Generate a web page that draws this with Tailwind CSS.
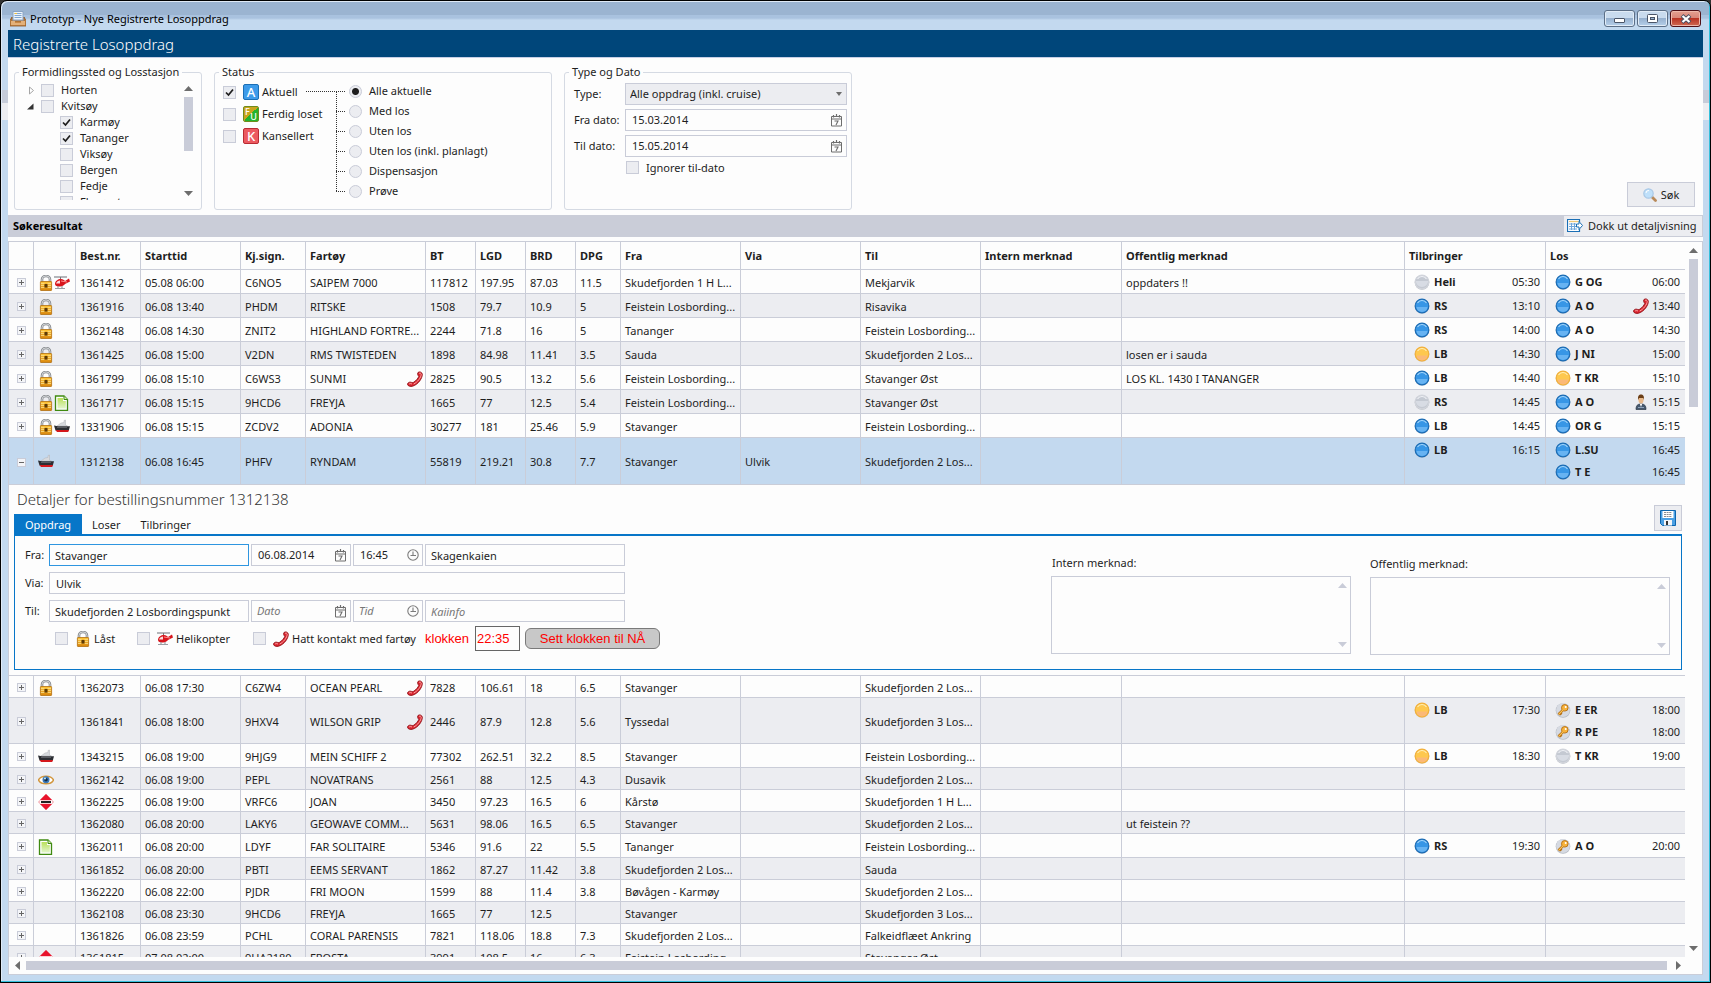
<!DOCTYPE html>
<html lang="no">
<head>
<meta charset="utf-8">
<title>Prototyp - Nye Registrerte Losoppdrag</title>
<script src="https://cdn.jsdelivr.net/npm/@tailwindcss/browser@4"></script>
</head>
<body class="h-screen overflow-hidden bg-[#333] font-['Noto_Sans','Open_Sans',sans-serif] text-[11px] leading-4 text-[#1e1e1e]">

<svg class="absolute h-0 w-0" aria-hidden="true">
  <defs>
    <linearGradient id="gold" x1="0" y1="0" x2="0" y2="1"><stop offset="0" stop-color="#ffc83c"/><stop offset="1" stop-color="#d9860c"/></linearGradient>
    <linearGradient id="page" x1="0" y1="0" x2="0" y2="1"><stop offset="0" stop-color="#b9e05a"/><stop offset="1" stop-color="#e2f5cc"/></linearGradient>
  </defs>
  <symbol id="lock" viewBox="0 0 16 16"><path d="M4 7V4.500a4 3.600 0 0 1 8 0V7" fill="none" stroke="#8a8d91" stroke-width="2.600"/><path d="M4 7V4.500a4 3.600 0 0 1 8 0V7" fill="none" stroke="#d3d6d9" stroke-width="1"/><rect x="2.400" y="6.500" width="11.200" height="9" rx=".6" fill="url(#gold)" stroke="#b27010" stroke-width=".8"/><path d="M3 8.500h3.500M9.500 8.500H13M3 10.500h3M10 10.500h3M3 12.500h3.500M9.500 12.500H13" stroke="#fbe08a" stroke-width=".8"/><rect x="6.500" y="9" width="3" height="3.500" fill="#5c3a08"/></symbol>
  <symbol id="heli" viewBox="0 0 16 16"><path d="M0 2h13" stroke="#9b9ea3" stroke-width="1.500"/><path d="M6.500 2v3" stroke="#777"/><path d="M1 9c0-3 3-5 6-5 2 0 3 1 4 2l4-2.500 1 3L11 9c-1 1.500-3 2.500-5 2.500C3 11.500 1 11 1 9z" fill="#d8151c"/><path d="M2 8.500C2.500 6.500 4.500 5.500 6 5.500V8.500z" fill="#fbdcdc"/><path d="M7 6l6 1" stroke="#ff8c8c"/><path d="M4 11v2.500M8 11v2.500M1 13.500h10" stroke="#9b9ea3" stroke-width="1.200"/></symbol>
  <symbol id="phone" viewBox="0 0 16 16"><path d="M11 1.500c1.500-1.300 4-.3 4.300 1.700.2 4-4.300 10.500-9.800 12-2 .5-4.500 0-5-1.700-.2-1.500 1.500-2.500 3-2.300 1.500.2 2 .8 3.300 0C9 9.700 11 7.500 11.800 5.500 11 4.500 10 2.500 11 1.500z" fill="#d92530" stroke="#8e0e14" stroke-width=".9"/><path d="M12 2.500c1-.8 2-.2 2.200.8 0 3-3.700 8-7.500 9.700M2 13.200c.7-.8 1.800-.7 3-.2" fill="none" stroke="#ffa3a3"/></symbol>
  <symbol id="note" viewBox="0 0 16 16"><path d="M1.500 1H10l3.500 3.500V15.500h-12z" fill="#fff" stroke="#3f8a10" stroke-width="1.300"/><path d="M3.500 3H9v3h2.800v7.500H3.500z" fill="url(#page)"/><path d="M10 1v3.500h3.500" fill="#d5eeb0" stroke="#3f8a10"/></symbol>
  <symbol id="ship" viewBox="0 0 16 16"><path d="M5 5.500l2-1.500 3-.5V1.500l1.500-.5v5l2 1H3z" fill="#d8dade" stroke="#b2b5b9" stroke-width=".5"/><path d="M0 6.500l4 .8h12l-1.200 4.200H1.500z" fill="#2c2e33"/><path d="M3 8.500h10" stroke="#666a70" stroke-width=".8"/><path d="M1.500 11h13.500l-.8 2H3z" fill="#d4181c"/></symbol>
  <symbol id="eye" viewBox="0 0 16 16"><path d="M.5 8C3 3 13 3 15.500 8 13 13 3 13 .5 8z" fill="#fff" stroke="#d2963c" stroke-width="1.500"/><circle cx="8" cy="7.800" r="3.500" fill="#3a78b8"/><circle cx="8" cy="7.800" r="1.800" fill="#152a44"/><circle cx="7" cy="6.500" r=".9" fill="#dff"/></symbol>
  <symbol id="stop" viewBox="0 0 16 16"><path d="M8 .500L15.500 8 8 15.500.500 8z" fill="#fbdadd" stroke="#ef8a94" stroke-width=".8"/><path d="M8 0l5.500 5.500V10.500L8 16l-5.500-5.500V5.500z" fill="#e8132c"/><rect x="2" y="6.200" width="12" height="3.600" fill="#fff"/><rect x="3" y="7" width="10" height="2" fill="#222"/></symbol>
  <symbol id="blue" viewBox="0 0 16 16"><circle cx="8" cy="8.500" r="7.300" fill="#c4c8cf"/><circle cx="8" cy="8" r="6.800" fill="#3796e6" stroke="#1c6cb4" stroke-width="1.200"/><path d="M2.500 9h11a5.500 5 0 0 1-11 0z" fill="#67b3f2"/><path d="M3.500 5a5.300 5.300 0 0 1 9 0" fill="none" stroke="#a9d8fb" stroke-width="1.100"/></symbol>
  <symbol id="yellow" viewBox="0 0 16 16"><circle cx="8" cy="8.500" r="7.300" fill="#cfc8bb"/><circle cx="8" cy="8" r="6.800" fill="#fec84e" stroke="#f2b03a" stroke-width="1.200"/><path d="M2.500 9.500h11a5.500 5 0 0 1-11 0z" fill="#fbb977"/><path d="M3.500 5a5.300 5.300 0 0 1 9 0" fill="none" stroke="#fff0b8" stroke-width="1.100"/></symbol>
  <symbol id="grey" viewBox="0 0 16 16"><circle cx="8" cy="8.500" r="7.300" fill="#b9bdc5"/><circle cx="8" cy="8" r="6.800" fill="#c4c9d2" stroke="#d2d5dc" stroke-width="1.200"/><path d="M1.800 7h12.400a6.200 6 0 0 1-12.400 0z" fill="#d8dce4"/><path d="M3.500 5a5.300 5.300 0 0 1 9 0" fill="none" stroke="#f0f2f6" stroke-width="1.100"/></symbol>
  <symbol id="key" viewBox="0 0 16 16"><circle cx="8" cy="8.500" r="7.300" fill="#b4b9c2"/><circle cx="8" cy="8" r="6.900" fill="#d6dae2"/><path d="M8.300 7.700L3.500 12.500M5 11l1.500 1.500" stroke="#b36d12" stroke-width="2.600"/><circle cx="9.800" cy="5.800" r="3.300" fill="#f7b23a" stroke="#b36d12" stroke-width=".9"/><path d="M8.300 7.700L3.700 12.300" stroke="#fbc65a" stroke-width="1.200"/><circle cx="10.700" cy="4.900" r="1" fill="#fff"/></symbol>
  <symbol id="person" viewBox="0 0 16 16"><path d="M3 15.500c0-4 1.500-5.500 5-5.500s5 1.500 5 5.500z" fill="#46586d" stroke="#2b3848" stroke-width=".7"/><path d="M6.800 10h2.400L8 13z" fill="#fff"/><ellipse cx="8" cy="5.500" rx="2.600" ry="4" fill="#e9b98a"/><path d="M5.200 6C4.500 2 6 .5 8 .5s3.500 1.500 2.800 5.500L10.200 4H6z" fill="#6b3e16"/><path d="M5 13.500h6" stroke="#8fa3ba" stroke-width="1"/></symbol>
  <symbol id="cal" viewBox="0 0 11 13"><path d="M.5 2.500h10v9.500H.5zM.5 5h10" fill="none" stroke="#6d6d6d"/><path d="M2.500 1v2.500M5.500 0v2M8.500 1v2.500" stroke="#6d6d6d" stroke-width="1.200"/><path d="M3.500 7h3.500l-2 4" fill="none" stroke="#6d6d6d" stroke-width="1.100"/></symbol>
  <symbol id="clock" viewBox="0 0 12 12"><circle cx="6" cy="6" r="5.200" fill="none" stroke="#7c7c7c" stroke-width="1.100"/><path d="M6 2.500V6.500M3.500 6.500H9" fill="none" stroke="#7c7c7c" stroke-width="1.100"/></symbol>
  <symbol id="tick" viewBox="0 0 13 13"><path d="M3 6.500L5.500 9l4.500-5.500" fill="none" stroke="#1e1e1e" stroke-width="1.700"/></symbol>
</svg>

<div class="flex h-full flex-col rounded-t-[7px] border border-black bg-[linear-gradient(#9bb4d1_0,#9bb4d1_14px,#a9c2df_14px,#a9c2df_17px,#c3d9ef_19px,#c3d9ef_89px,#c6ccd9_89px,#c6ccd9_102px,#ecedf1_102px,#ecedf1_119px,#c3d9ef_119px)] px-[7px] pb-[7px] shadow-[inset_-1px_-1px_0_#35c0dc,inset_1px_1px_0_#dfeaf6]">

  <div class="flex h-[29px] shrink-0 items-center">
    <svg class="mt-1.5 ml-0.5 h-4 w-4" viewBox="0 0 16 16"><path d="M3 .500h10V9H3z" fill="#eef4fb" stroke="#8aa4c4"/><path d="M4.500 2.500h7M4.500 4.500h7M4.500 6.500h7" stroke="#7fa6d2"/><path d="M4.500 2.500h2.500" stroke="#f0c040"/><path d="M0 9.500L2 6v4h12V6l2 3.500V15H0z" fill="#c98a48" stroke="#8a5422" stroke-width=".8"/><path d="M1 10h4v2h6v-2h4v4H1z" fill="#e3b17a"/></svg>
    <h1 class="mt-1.5 ml-1 flex-1 text-black">Prototyp - Nye Registrerte Losoppdrag</h1>
    <div class="mt-1.5 mr-0.5 flex gap-0.5">
      <button aria-label="Minimer" class="grid h-[17px] w-[31px] place-items-center rounded-[3px] border border-[#5c6f87] bg-[linear-gradient(#c9dbee_50%,#97b1cf_50%,#b6d0ea)] shadow-[inset_0_0_0_1px_#e2ecf7]"><span class="mt-1 h-[5px] w-[11px] rounded-[1px] border border-[#4a5568] bg-white"></span></button>
      <button aria-label="Maksimer" class="grid h-[17px] w-[31px] place-items-center rounded-[3px] border border-[#5c6f87] bg-[linear-gradient(#c9dbee_50%,#97b1cf_50%,#b6d0ea)] shadow-[inset_0_0_0_1px_#e2ecf7]"><svg class="h-[9px] w-[11px]" viewBox="0 0 11 9"><rect x=".5" y=".5" width="10" height="8" rx="1" fill="#fff" stroke="#4a5568"/><rect x="3.500" y="3.500" width="4" height="2" fill="#9cb5d2" stroke="#4a5568"/></svg></button>
      <button aria-label="Lukk" class="grid h-[17px] w-[31px] place-items-center rounded-[3px] border border-[#4f1016] bg-[linear-gradient(#e3a091_0,#d98476_50%,#b93424_50%,#cf6a52)] shadow-[inset_0_0_0_1px_#eeb8ab]"><svg class="h-[10px] w-[12px]" viewBox="0 0 12 10"><path d="M2 1.500l8 7M10 1.500l-8 7" stroke="#4a4f60" stroke-width="4"/><path d="M2.500 2l7 6M9.500 2l-7 6" stroke="#fff" stroke-width="2.200"/></svg></button>
    </div>
  </div>

  <div class="flex min-h-0 flex-1 flex-col bg-[#fdfdfd]">
    <header class="flex h-7 shrink-0 items-center border-b border-[#c6cfe6] bg-[#00467a] pl-[5px]">
      <h2 class="text-[15px] leading-5 font-light text-white">Registrerte Losoppdrag</h2>
    </header>

    <form class="flex shrink-0 items-end gap-3 pt-1.5 pr-2 pb-[5px] pl-1.5">
      <fieldset class="h-[146px] w-[188px] rounded-[3px] border border-[#d5dae3]">
        <legend class="ml-1 px-[3px]">Formidlingssted og Losstasjon</legend>
        <div class="mt-0.5 flex h-[118px] overflow-hidden">
          <ul id="tree" class="flex-1 pl-3"></ul>
          <div class="mr-2 flex w-[9px] flex-col items-center py-1">
            <svg class="h-[5px] w-[9px]" viewBox="0 0 9 5"><path d="M0 5L4.500 0 9 5z" fill="#6d6d6d"/></svg>
            <span class="mt-1.5 h-[54px] w-[9px] bg-[#c9ccd8]"></span>
            <svg class="mt-auto h-[5px] w-[9px]" viewBox="0 0 9 5"><path d="M0 0h9L4.500 5z" fill="#6d6d6d"/></svg>
          </div>
        </div>
      </fieldset>

      <fieldset class="h-[146px] w-[338px] rounded-[3px] border border-[#d5dae3]">
        <legend class="ml-1 px-[3px]">Status</legend>
        <div class="mt-px flex pl-2">
          <div class="w-[83px] shrink-0">
            <label class="flex h-[22px] items-center whitespace-nowrap"><span class="relative mr-[7px] h-[13px] w-[13px] shrink-0"><input type="checkbox" checked class="peer block h-[13px] w-[13px] appearance-none border border-[#c9ccd8] bg-[#ecedf1]"><svg class="pointer-events-none absolute inset-0 hidden h-[13px] w-[13px] peer-checked:block"><use href="#tick"/></svg></span><span class="mr-[3px] grid h-4 w-4 shrink-0 place-items-center rounded-[2px] border border-[#1b6fb5] bg-[#3d9bea] text-[13px] leading-3 font-medium text-white">A</span>Aktuell</label>
            <label class="flex h-[22px] items-center whitespace-nowrap"><input type="checkbox" class="mr-[7px] block h-[13px] w-[13px] shrink-0 appearance-none border border-[#c9ccd8] bg-[#ecedf1]"><span class="mr-[3px] flex h-4 w-4 shrink-0 justify-between rounded-[2px] border border-[#6f8c1c] bg-[linear-gradient(135deg,#c9a41c_50%,#25b32c_50%)] px-px text-[9px] leading-[9px] font-medium text-white"><span>F</span><span class="self-end">U</span></span>Ferdig loset</label>
            <label class="flex h-[22px] items-center whitespace-nowrap"><input type="checkbox" class="mr-[7px] block h-[13px] w-[13px] shrink-0 appearance-none border border-[#c9ccd8] bg-[#ecedf1]"><span class="mr-[3px] grid h-4 w-4 shrink-0 place-items-center rounded-[2px] border border-[#b92b33] bg-[#ec5a60] text-[13px] leading-3 font-medium text-white">K</span>Kansellert</label>
          </div>
          <svg class="h-[120px] w-[43px] shrink-0" viewBox="0 0 43 120" shape-rendering="crispEdges"><path d="M0 10.500h39M30 30.500h9M30 50.500h9M30 70.500h9M30 90.500h9M30 110.500h9M30.500 11v100" fill="none" stroke="#333" stroke-dasharray="1 1"/></svg>
          <div id="radios"></div>
        </div>
      </fieldset>

      <fieldset class="h-[146px] w-[288px] rounded-[3px] border border-[#d5dae3]">
        <legend class="ml-1 px-[3px]">Type og Dato</legend>
        <div class="mt-[3px] grid grid-cols-[51px_1fr] items-center gap-y-1 pr-1 pl-[9px]">
          <label for="type">Type:</label>
          <div class="relative">
            <select id="type" class="block h-[22px] w-full appearance-none border border-[#c9ccd8] bg-[#ecedf1] pl-1"><option>Alle oppdrag (inkl. cruise)</option></select>
            <svg class="pointer-events-none absolute top-[9px] right-[5px] h-1 w-[6px]" viewBox="0 0 6 4"><path d="M0 0h6L3 4z" fill="#6d6d6d"/></svg>
          </div>
          <label for="from" class="whitespace-nowrap">Fra dato:</label>
          <div class="flex h-[22px] items-center border border-[#c9ccd8] pr-1"><input id="from" value="15.03.2014" class="min-w-0 flex-1 pl-1.5 outline-none"><button type="button" aria-label="Velg fra dato"><svg class="h-[13px] w-[11px]"><use href="#cal"/></svg></button></div>
          <label for="to" class="whitespace-nowrap">Til dato:</label>
          <div class="flex h-[22px] items-center border border-[#c9ccd8] pr-1"><input id="to" value="15.05.2014" class="min-w-0 flex-1 pl-1.5 outline-none"><button type="button" aria-label="Velg til dato"><svg class="h-[13px] w-[11px]"><use href="#cal"/></svg></button></div>
          <label class="col-start-2 flex h-[13px] items-center pl-px"><input type="checkbox" class="mr-[7px] h-[13px] w-[13px] appearance-none border border-[#c9ccd8] bg-[#ecedf1]">Ignorer til-dato</label>
        </div>
      </fieldset>

      <button type="button" class="mb-[3px] ml-auto flex h-[25px] w-[68px] items-center justify-center gap-1 border border-[#c9ccd8] bg-[#ecedf1]">
        <svg class="h-[14px] w-[14px]" viewBox="0 0 14 14"><path d="M8.500 8.500l4 4" stroke="#b98a5a" stroke-width="2.800" stroke-linecap="round"/><circle cx="5.500" cy="5.500" r="4.700" fill="#bfe0fa" stroke="#a9c8e6" stroke-width="1.200"/><path d="M3 5a2.700 2.700 0 0 1 3-2.500" fill="none" stroke="#fff"/></svg>Søk</button>
    </form>

    <div class="flex h-[22px] shrink-0 items-center justify-between bg-[#cacdd8] pr-px pl-[5px]">
      <h3 class="font-bold text-black">Søkeresultat</h3>
      <button class="flex h-5 w-[138px] items-center gap-[5px] bg-[#ecedf1] pl-[3px] whitespace-nowrap">
        <svg class="h-4 w-4 shrink-0" viewBox="0 0 16 16"><path d="M12.500 4V1.500H.500v12h12V11" fill="#fff" stroke="#1b6fb5" stroke-width="1.200"/><path d="M2 3.500h9.500" stroke="#f0c97a" stroke-width="1.300"/><path d="M2 6h7M2 8.500h7M2 11h8M4.500 5v7M7.500 5v7" stroke="#6fa6dc"/><path d="M9.500 6h2.500V3.500l3.500 4L12 11.500V9H9.500z" fill="#fff" stroke="#1b6fb5"/></svg>Dokk ut detaljvisning</button>
    </div>

    <div class="mt-1 flex min-h-0 flex-1 flex-col border border-[#cacdd8]">
      <div class="flex min-h-0 flex-1">
        <div class="min-w-0 flex-1 overflow-hidden">
          <table class="w-full table-fixed border-separate border-spacing-0">
            <colgroup><col class="w-[25px]"><col class="w-[42px]"><col class="w-[65px]"><col class="w-[100px]"><col class="w-[65px]"><col class="w-[120px]"><col class="w-[50px]"><col class="w-[50px]"><col class="w-[50px]"><col class="w-[45px]"><col class="w-[120px]"><col class="w-[120px]"><col class="w-[120px]"><col class="w-[141px]"><col><col class="w-[141px]"><col class="w-[139px]"></colgroup>
            <thead><tr id="head" class="h-7"></tr></thead>
            <tbody id="upper"></tbody>
            <tbody>
              <tr>
                <td colspan="17" class="h-[191px] border-b border-[#cacdd8] pr-[3px] pb-[5px] pl-[5px] align-bottom">
                  <div class="flex h-[49px] items-end">
                    <div class="flex-1">
                      <h3 class="pb-[5px] pl-[3px] text-[15px] leading-5 font-light text-[#333]">Detaljer for bestillingsnummer 1312138</h3>
                      <div class="flex" role="tablist">
                        <button role="tab" aria-selected="true" class="h-5 w-[68px] bg-[#0776c8] pt-px text-white">Oppdrag</button>
                        <button role="tab" class="ml-2.5 h-5 pt-px">Loser</button>
                        <button role="tab" class="ml-5 h-5 pt-px">Tilbringer</button>
                      </div>
                    </div>
                    <button aria-label="Lagre" class="mb-[3px] grid h-[26px] w-7 place-items-center border border-[#c9ccd8] bg-[#ecedf1]"><svg class="h-4 w-4" viewBox="0 0 16 16"><path d="M.5.500h15v15H2.500l-2-2z" fill="#4ba0e4" stroke="#0e66ae"/><rect x="2.500" y="1" width="11" height="7" fill="#fff"/><path d="M4 2.500h8M4 4.500h8M4 6.500h8" stroke="#8a8d91" stroke-dasharray="2 .6"/><rect x="4" y="10" width="8" height="5.500" fill="#f3f5f8"/><rect x="6" y="11" width="2" height="4" fill="#333"/></svg></button>
                  </div>
                  <div class="flex h-[136px] justify-between border border-t-2 border-[#0776c8] pr-[11px] pl-2.5">
                    <div class="pt-2">
                      <div class="mb-1.5 flex items-center gap-0.5"><label for="fra" class="w-[22px]">Fra:</label>
                        <input id="fra" value="Stavanger" class="h-[22px] w-[200px] border border-[#2f96e0] px-[5px] outline-none">
                        <div class="flex h-[22px] w-[100px] items-center border border-[#c9ccd8] pr-1"><input aria-label="Fra dato" value="06.08.2014" class="min-w-0 flex-1 pl-1.5 outline-none"><button aria-label="Velg dato"><svg class="h-[13px] w-[11px]"><use href="#cal"/></svg></button></div>
                        <div class="flex h-[22px] w-[70px] items-center border border-[#c9ccd8] pr-[3px]"><input aria-label="Fra tid" value="16:45" class="min-w-0 flex-1 pl-1.5 outline-none"><button aria-label="Velg tid"><svg class="h-3 w-3"><use href="#clock"/></svg></button></div>
                        <input aria-label="Kai fra" value="Skagenkaien" class="h-[22px] w-[200px] border border-[#c9ccd8] px-[5px] outline-none"></div>
                      <div class="mb-1.5 flex items-center gap-0.5"><label for="via" class="w-[22px]">Via:</label><input id="via" value="Ulvik" class="h-[22px] w-[576px] border border-[#c9ccd8] px-1.5 outline-none"></div>
                      <div class="flex items-center gap-0.5"><label for="til" class="w-[22px]">Til:</label>
                        <input id="til" value="Skudefjorden 2 Losbordingspunkt" class="h-[22px] w-[200px] border border-[#c9ccd8] px-[5px] outline-none">
                        <div class="flex h-[22px] w-[100px] items-center border border-[#c9ccd8] pr-1"><input aria-label="Til dato" placeholder="Dato" class="min-w-0 flex-1 pl-[5px] outline-none placeholder:text-[#777] placeholder:italic"><button aria-label="Velg dato"><svg class="h-[13px] w-[11px]"><use href="#cal"/></svg></button></div>
                        <div class="flex h-[22px] w-[70px] items-center border border-[#c9ccd8] pr-[3px]"><input aria-label="Til tid" placeholder="Tid" class="min-w-0 flex-1 pl-[5px] outline-none placeholder:text-[#777] placeholder:italic"><button aria-label="Velg tid"><svg class="h-3 w-3"><use href="#clock"/></svg></button></div>
                        <input aria-label="Kai til" placeholder="Kaiinfo" class="h-[22px] w-[200px] border border-[#c9ccd8] px-[5px] outline-none placeholder:text-[#777] placeholder:italic"></div>
                      <div class="mt-1 flex h-[25px] items-center pl-[30px] whitespace-nowrap">
                        <label class="flex w-[82px] shrink-0 items-center"><input type="checkbox" class="mr-[7px] h-[13px] w-[13px] appearance-none border border-[#c9ccd8] bg-[#ecedf1]"><svg class="mr-[3px] h-4 w-4"><use href="#lock"/></svg>Låst</label>
                        <label class="flex w-[116px] shrink-0 items-center"><input type="checkbox" class="mr-[7px] h-[13px] w-[13px] appearance-none border border-[#c9ccd8] bg-[#ecedf1]"><svg class="mr-[3px] h-4 w-4"><use href="#heli"/></svg>Helikopter</label>
                        <label class="flex w-[172px] shrink-0 items-center"><input type="checkbox" class="mr-[7px] h-[13px] w-[13px] appearance-none border border-[#c9ccd8] bg-[#ecedf1]"><svg class="mr-[3px] h-4 w-4"><use href="#phone"/></svg>Hatt kontakt med fartøy</label>
                        <label for="kl" class="w-[50px] shrink-0 font-['Liberation_Sans',sans-serif] text-[13px] text-[#f00]">klokken</label>
                        <input id="kl" value="22:35" class="h-[25px] w-[45px] shrink-0 border border-[#666] pl-px font-['Liberation_Sans',sans-serif] text-[13px] text-[#f00] outline-none">
                        <button class="ml-[5px] h-[21px] w-[135px] shrink-0 rounded-[6px] border border-[#7a7a7a] bg-[#c8c8c8] font-['Liberation_Sans',sans-serif] text-[13px] text-[#f00]">Sett klokken til NÅ</button>
                      </div>
                    </div>
                    <div class="flex gap-[19px]">
                      <div class="pt-[19px]"><label for="im" class="mb-[5px] block pl-px">Intern merknad:</label>
                        <div class="relative"><textarea id="im" class="block h-[78px] w-[300px] resize-none border border-[#c9ccd8] outline-none"></textarea>
                        <svg class="pointer-events-none absolute top-1.5 right-1 h-[66px] w-[9px]" viewBox="0 0 9 66"><path d="M0 6L4.500 1 9 6zM0 60h9L4.500 65z" fill="#c9ccd8"/></svg></div></div>
                      <div class="pt-5"><label for="om" class="mb-[5px] block">Offentlig merknad:</label>
                        <div class="relative"><textarea id="om" class="block h-[78px] w-[300px] resize-none border border-[#c9ccd8] outline-none"></textarea>
                        <svg class="pointer-events-none absolute top-1.5 right-1 h-[66px] w-[9px]" viewBox="0 0 9 66"><path d="M0 6L4.500 1 9 6zM0 60h9L4.500 65z" fill="#c9ccd8"/></svg></div></div>
                    </div>
                  </div>
                </td>
              </tr>
            </tbody>
            <tbody id="lower"></tbody>
          </table>
        </div>
        <div class="flex w-[17px] shrink-0 flex-col items-center pt-1.5 pb-[6px]">
          <svg class="h-[5px] w-[9px]" viewBox="0 0 9 5"><path d="M0 5L4.500 0 9 5z" fill="#6d6d6d"/></svg>
          <span class="mt-1.5 h-[148px] w-[9px] bg-[#c9ccd8]"></span>
          <svg class="mt-auto h-[5px] w-[9px]" viewBox="0 0 9 5"><path d="M0 0h9L4.500 5z" fill="#6d6d6d"/></svg>
        </div>
      </div>
      <div class="flex h-[17px] shrink-0 items-center pr-[21px] pl-1.5">
        <svg class="h-[9px] w-[5px]" viewBox="0 0 5 9"><path d="M5 0v9L0 4.500z" fill="#6d6d6d"/></svg>
        <span class="mr-[9px] ml-1.5 h-[9px] flex-1 bg-[#c9ccd8]"></span>
        <svg class="h-[9px] w-[5px]" viewBox="0 0 5 9"><path d="M0 0v9l5-4.500z" fill="#6d6d6d"/></svg>
      </div>
    </div>
  </div>
</div>

<script>
const box = (checked) => `<span class="relative mr-[7px] h-[13px] w-[13px] shrink-0"><input type="checkbox" ${checked ? 'checked' : ''} class="peer block h-[13px] w-[13px] appearance-none border border-[#c9ccd8] bg-[#ecedf1]"><svg class="pointer-events-none absolute inset-0 hidden h-[13px] w-[13px] peer-checked:block"><use href="#tick"/></svg></span>`;
const icon = (name) => `<svg class="h-4 w-4 shrink-0"><use href="#${name}"/></svg>`;

// Station tree: name, level, checked, expander
document.getElementById('tree').innerHTML = [
  ['Horten', 0, false, '<path d="M2.500 1v7l4-3.500z" fill="#fff" stroke="#a5a5a5"/>'],
  ['Kvitsøy', 0, false, '<path d="M6.500 1.500v6H0z" fill="#333"/>'],
  ['Karmøy', 1, true], ['Tananger', 1, true], ['Viksøy', 1, false],
  ['Bergen', 1, false], ['Fedje', 1, false], ['Florø, st', 1, false],
].map(([name, level, checked, arrow]) =>
  `<li class="flex h-4 items-center">${level ? '<span class="w-[33px]"></span>' : `<svg class="mr-[5px] h-[9px] w-[9px]" viewBox="0 0 9 9">${arrow}</svg>`}<label class="flex items-center whitespace-nowrap">${box(checked)}${name}</label></li>`
).join('');

document.getElementById('radios').innerHTML =
  ['Alle aktuelle', 'Med los', 'Uten los', 'Uten los (inkl. planlagt)', 'Dispensasjon', 'Prøve'].map((t, i) =>
  `<label class="flex h-5 items-center"><input type="radio" name="status" ${i ? '' : 'checked'} class="mr-[7px] h-[13px] w-[13px] appearance-none rounded-full border border-[#c9ccd8] bg-[#ecedf1] checked:bg-[radial-gradient(circle,#1e1e1e_3px,#ecedf1_4px)]">${t}</label>`).join('');

document.getElementById('head').innerHTML =
  ['', '', 'Best.nr.', 'Starttid', 'Kj.sign.', 'Fartøy', 'BT', 'LGD', 'BRD', 'DPG', 'Fra', 'Via', 'Til', 'Intern merknad', 'Offentlig merknad', 'Tilbringer', 'Los'].map(t =>
  `<th class="border-r border-b border-[#cacdd8] px-1 text-left font-bold whitespace-nowrap last:border-r-0">${t}</th>`).join('');

const F = 'Feistein Losbording...', S2 = 'Skudefjorden 2 Los...', ST = 'Stavanger';
// height, icons, nr, start, sign, vessel, phone, BT, LGD, BRD, DPG, from, via, to, public note, transport, pilots
const upper = [
  [24, 'lock heli', '1361412', '05.08 06:00', 'C6NO5', 'SAIPEM 7000', 0, '117812', '197.95', '87.03', '11.5', 'Skudefjorden 1 H L...', '', 'Mekjarvik', 'oppdaters !!', [['grey', 'Heli', '05:30']], [['blue', 'G OG', '06:00']]],
  [24, 'lock', '1361916', '06.08 13:40', 'PHDM', 'RITSKE', 0, '1508', '79.7', '10.9', '5', F, '', 'Risavika', '', [['blue', 'RS', '13:10']], [['blue', 'A O', '13:40', 'phone']]],
  [24, 'lock', '1362148', '06.08 14:30', 'ZNIT2', 'HIGHLAND FORTRE...', 0, '2244', '71.8', '16', '5', 'Tananger', '', F, '', [['blue', 'RS', '14:00']], [['blue', 'A O', '14:30']]],
  [24, 'lock', '1361425', '06.08 15:00', 'V2DN', 'RMS TWISTEDEN', 0, '1898', '84.98', '11.41', '3.5', 'Sauda', '', S2, 'losen er i sauda', [['yellow', 'LB', '14:30']], [['blue', 'J NI', '15:00']]],
  [24, 'lock', '1361799', '06.08 15:10', 'C6WS3', 'SUNMI', 1, '2825', '90.5', '13.2', '5.6', F, '', 'Stavanger Øst', 'LOS KL. 1430 I TANANGER', [['blue', 'LB', '14:40']], [['yellow', 'T KR', '15:10']]],
  [24, 'lock note', '1361717', '06.08 15:15', '9HCD6', 'FREYJA', 0, '1665', '77', '12.5', '5.4', F, '', 'Stavanger Øst', '', [['grey', 'RS', '14:45']], [['blue', 'A O', '15:15', 'person']]],
  [24, 'lock ship', '1331906', '06.08 15:15', 'ZCDV2', 'ADONIA', 0, '30277', '181', '25.46', '5.9', ST, '', F, '', [['blue', 'LB', '14:45']], [['blue', 'OR G', '15:15']]],
  [47, 'ship', '1312138', '06.08 16:45', 'PHFV', 'RYNDAM', 0, '55819', '219.21', '30.8', '7.7', ST, 'Ulvik', S2, '', [['blue', 'LB', '16:15']], [['blue', 'L.SU', '16:45'], ['blue', 'T E', '16:45']]],
];
const lower = [
  [22, 'lock', '1362073', '06.08 17:30', 'C6ZW4', 'OCEAN PEARL', 1, '7828', '106.61', '18', '6.5', ST, '', S2, '', [], []],
  [46, '', '1361841', '06.08 18:00', '9HXV4', 'WILSON GRIP', 1, '2446', '87.9', '12.8', '5.6', 'Tyssedal', '', 'Skudefjorden 3 Los...', '', [['yellow', 'LB', '17:30']], [['key', 'E ER', '18:00'], ['key', 'R PE', '18:00']]],
  [24, 'ship', '1343215', '06.08 19:00', '9HJG9', 'MEIN SCHIFF 2', 0, '77302', '262.51', '32.2', '8.5', ST, '', F, '', [['yellow', 'LB', '18:30']], [['grey', 'T KR', '19:00']]],
  [22, 'eye', '1362142', '06.08 19:00', 'PEPL', 'NOVATRANS', 0, '2561', '88', '12.5', '4.3', 'Dusavik', '', S2, '', [], []],
  [22, 'stop', '1362225', '06.08 19:00', 'VRFC6', 'JOAN', 0, '3450', '97.23', '16.5', '6', 'Kårstø', '', 'Skudefjorden 1 H L...', '', [], []],
  [22, '', '1362080', '06.08 20:00', 'LAKY6', 'GEOWAVE COMM...', 0, '5631', '98.06', '16.5', '6.5', ST, '', S2, 'ut feistein ??', [], []],
  [24, 'note', '1362011', '06.08 20:00', 'LDYF', 'FAR SOLITAIRE', 0, '5346', '91.6', '22', '5.5', 'Tananger', '', F, '', [['blue', 'RS', '19:30']], [['key', 'A O', '20:00']]],
  [22, '', '1361852', '06.08 20:00', 'PBTI', 'EEMS SERVANT', 0, '1862', '87.27', '11.42', '3.8', S2, '', 'Sauda', '', [], []],
  [22, '', '1362220', '06.08 22:00', 'PJDR', 'FRI MOON', 0, '1599', '88', '11.4', '3.8', 'Bøvågen - Karmøy', '', S2, '', [], []],
  [22, '', '1362108', '06.08 23:30', '9HCD6', 'FREYJA', 0, '1665', '77', '12.5', '', ST, '', 'Skudefjorden 3 Los...', '', [], []],
  [22, '', '1361826', '06.08 23:59', 'PCHL', 'CORAL PARENSIS', 0, '7821', '118.06', '18.8', '7.3', S2, '', 'Falkeidflæet Ankring', '', [], []],
  [22, 'stop', '1361815', '07.08 02:00', '9HA2180', 'FROSTA', 0, '3991', '108.5', '16', '6.3', F, '', 'Stavanger Øst', '', [], []],
];
const heights = { 22: 'h-[22px]', 24: 'h-[24px]', 46: 'h-[46px]', 47: 'h-[47px]' };
const cell = (html) => `<td class="overflow-hidden border-r border-b border-[#cacdd8] pt-0.5 pl-1 whitespace-nowrap">${html}</td>`;
const entries = (list) => list.map(([dot, name, time, extra]) =>
  `<div class="flex h-[22px] items-center pr-[5px] pl-[9px]">${icon(dot)}<b class="ml-1 flex-1">${name}</b>${extra ? icon(extra) : ''}<span class="ml-[3px]">${time}</span></div>`).join('');

function row(r, i) {
  const [h, icons, nr, start, sign, vessel, phone, bt, lgd, brd, dpg, from, via, to, note, transport, pilots] = r;
  const open = h === 47;
  const bg = open ? 'bg-[#c3d9ef]' : i % 2 ? 'bg-[#ecedf1]' : '';
  return `<tr class="${heights[h]} ${bg}">
    <td class="border-r border-b border-[#cacdd8] pt-0.5"><button aria-label="${open ? 'Skjul' : 'Vis'} ${nr}" class="mx-auto block h-[9px] w-[9px] border border-[#c9ccd8] bg-[#f4f5f8]"><svg class="h-[7px] w-[7px]" viewBox="0 0 7 7"><path d="${open ? 'M1 3.500h5' : 'M1 3.500h5M3.500 1v5'}" stroke="#666"/></svg></button></td>
    ${cell(`<div class="flex">${icons ? icons.split(' ').map(icon).join('') : ''}</div>`)}
    ${[nr, start, sign].map(cell).join('')}
    ${cell(`<div class="flex items-center justify-between pr-0.5"><span>${vessel}</span>${phone ? icon('phone') : ''}</div>`)}
    ${[bt, lgd, brd, dpg, from, via, to, '', note].map(cell).join('')}
    <td class="border-r border-b border-[#cacdd8] pt-px align-top">${entries(transport)}</td>
    <td class="border-b border-[#cacdd8] pt-px align-top">${entries(pilots)}</td>
  </tr>`;
}
document.getElementById('upper').innerHTML = upper.map(row).join('');
document.getElementById('lower').innerHTML = lower.map(row).join('');
</script>
</body>
</html>
